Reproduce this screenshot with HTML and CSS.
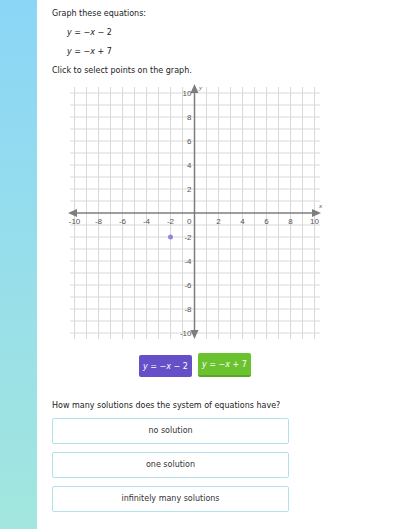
FILE: index.html
```html
<!DOCTYPE html>
<html lang="en">
<head>
    <meta charset="UTF-8">
    <meta name="viewport" content="width=device-width, initial-scale=1.0">
    <title>Graph these equations</title>
    <link rel="stylesheet" href="styles.css">
</head>
<body>

    <div class="page">
        <div class="sidebar"></div>

        <div class="main">
            <div class="line">Graph these equations:</div>
            <div class="line eq"><i>y</i> = −<i>x</i> − 2</div>
            <div class="line eq"><i>y</i> = −<i>x</i> + 7</div>
            <div class="line">Click to select points on the graph.</div>

            <div class="graph-wrap">
                <svg id="graph" class="graph" width="270" height="265" viewBox="0 0 270 265"></svg>

                <div class="eq-buttons">
                    <button class="eq-btn purple"><i>y</i> = −<i>x</i> − 2</button>
                    <button class="eq-btn green"><i>y</i> = −<i>x</i> + 7</button>
                </div>
            </div>

            <div class="line question">How many solutions does the system of equations have?</div>

            <div class="choices">
                <div class="choice">no solution</div>
                <div class="choice">one solution</div>
                <div class="choice">infinitely many solutions</div>
            </div>
        </div>
    </div>

    <script>
        // unit -> pixel inside the svg
        const ox = 134.5, oy = 133, step = 12;
        const svg = document.getElementById("graph");
        const NS = "http://www.w3.org/2000/svg";

        function add(tag, attrs, text) {
            let el = document.createElementNS(NS, tag);
            for (let k in attrs) el.setAttribute(k, attrs[k]);
            if (text !== undefined) el.textContent = text;
            svg.appendChild(el);
            return el;
        }

        // grid lines
        for (let i = -10; i <= 10; i++) {
            if (i === 0) continue;
            let x = ox + i * step, y = oy - i * step;
            add("line", { x1: x, y1: 7, x2: x, y2: 259, class: "grid" });
            add("line", { x1: 10, y1: y, x2: 260, y2: y, class: "grid" });
        }

        // axes with arrows at both ends
        add("line", { x1: 14, y1: oy, x2: 255, y2: oy, class: "axis" });
        add("line", { x1: ox, y1: 10, x2: ox, y2: 253, class: "axis" });
        add("polygon", { points: `8,${oy} 17,${oy - 4} 17,${oy + 4}`, class: "arrow" });
        add("polygon", { points: `261,${oy} 252,${oy - 4} 252,${oy + 4}`, class: "arrow" });
        add("polygon", { points: `${ox},4 ${ox - 4},13 ${ox + 4},13`, class: "arrow" });
        add("polygon", { points: `${ox},259 ${ox - 4},250 ${ox + 4},250`, class: "arrow" });

        add("text", { x: 259, y: 128, class: "axis-name" }, "x");
        add("text", { x: 139, y: 10, class: "axis-name" }, "y");

        // tick labels
        for (let i = -10; i <= 10; i += 2) {
            if (i === 0) continue;
            let label = i < 0 ? "-" + Math.abs(i) : String(i);
            add("text", { x: ox + i * step, y: oy + 11, class: "tick", "text-anchor": "middle" }, label);
            add("text", { x: ox - 3, y: oy - i * step + 3, class: "tick", "text-anchor": "end" }, label);
        }
        add("text", { x: ox - 3, y: oy + 11, class: "tick", "text-anchor": "end" }, "0");

        // selected point
        add("circle", { cx: ox - 2 * step, cy: oy + 2 * step, r: 2.5, class: "point" });
    </script>

</body>
</html>
```

FILE: styles.css
```css
body {
    margin: 0;
    background: #fff;
    font-family: "DejaVu Sans", Verdana, sans-serif;
    color: #222;
}
.page {
    display: flex;
    min-height: 529px;
}
.sidebar {
    width: 37px;
    flex-shrink: 0;
    background: linear-gradient(#8bd6f7, #a2e6de);
}
.main {
    flex: 1;
    padding: 4px 0 0 15px;
    font-size: 8px;
}
.line {
    height: 19px;
    line-height: 19px;
}
.eq {
    padding-left: 15px;
}
.graph-wrap {
    width: 270px;
    margin-left: 8px;
}
.graph {
    display: block;
}
.grid {
    stroke: #d9d9d9;
    stroke-width: 1;
}
.axis {
    stroke: #7d7d7d;
    stroke-width: 1.5;
}
.arrow {
    fill: #7d7d7d;
}
.tick {
    font-family: "Liberation Sans", Arial, sans-serif;
    font-size: 8px;
    fill: #555;
}
.axis-name {
    font-family: "Liberation Serif", serif;
    font-style: italic;
    font-size: 7px;
    fill: #555;
}
.point {
    fill: #8f85e6;
}
.eq-buttons {
    display: flex;
    justify-content: center;
    align-items: flex-end;
    gap: 6px;
    margin-top: 8px;
}
.eq-btn {
    font-family: "DejaVu Sans", Verdana, sans-serif;
    font-size: 8px;
    color: #fff;
    border: none;
    border-radius: 2px;
    padding: 0;
    width: 53px;
    height: 22px;
}
.purple {
    background: #6550c8;
}
.green {
    background: #6bc22f;
    height: 24px;
    border-bottom: 2px solid #5aa626;
}
.question {
    margin-top: 19px;
}
.choices {
    width: 237px;
    margin-top: 3px;
}
.choice {
    height: 24px;
    line-height: 24px;
    border: 1px solid #b2e0ef;
    border-radius: 2px;
    text-align: center;
    color: #333;
    margin-bottom: 8px;
}
```
